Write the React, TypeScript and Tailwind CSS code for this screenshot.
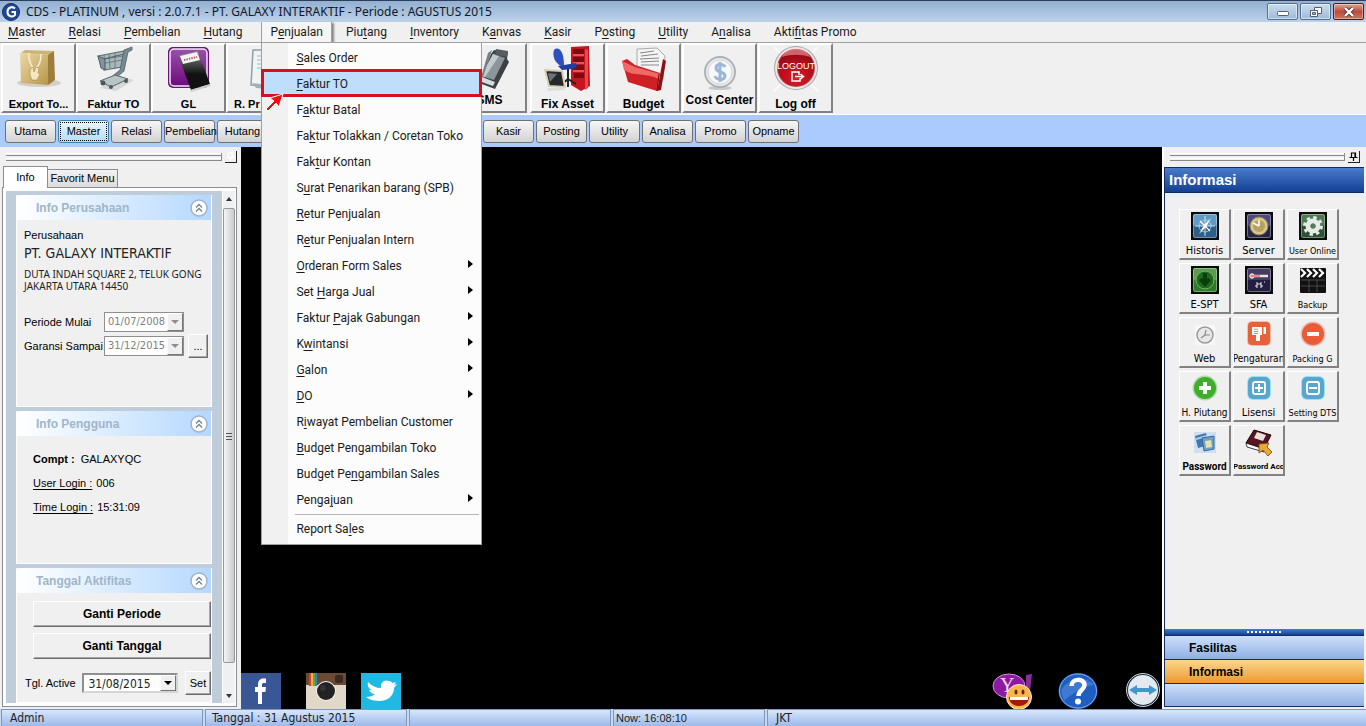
import { Fragment, ReactNode } from 'react';

const menus = [
  '&Master',
  '&Relasi',
  '&Pembelian',
  '&Hutang',
  'P&enjualan',
  'Piu&tang',
  '&Inventory',
  'K&anvas',
  '&Kasir',
  'P&osting',
  '&Utility',
  'A&nalisa',
  'Akti&fitas Promo',
];

const penjualanItems = [
  { label: '&Sales Order' },
  { label: '&Faktur TO', active: true },
  { label: 'F&aktur Batal' },
  { label: 'Fa&ktur Tolakkan / Coretan Toko' },
  { label: 'Fak&tur Kontan' },
  { label: 'S&urat Penarikan barang (SPB)' },
  { label: '&Retur Penjualan' },
  { label: 'R&etur Penjualan Intern' },
  { label: '&Orderan Form Sales', sub: true },
  { label: 'Set &Harga Jual', sub: true },
  { label: 'Faktur &Pajak Gabungan', sub: true },
  { label: 'K&wintansi', sub: true },
  { label: '&Galon', sub: true },
  { label: '&DO', sub: true },
  { label: 'R&iwayat Pembelian Customer' },
  { label: '&Budget Pengambilan Toko' },
  { label: 'Budget Pe&ngambilan Sales' },
  { label: 'Penga&juan', sub: true },
];

// "&" marks the access key, same as in the desktop resource files
const Mnemonic = ({ text }: { text: string }) => {
  const i = text.indexOf('&');
  if (i < 0) return <>{text}</>;
  return (
    <span className="whitespace-pre">
      {text.slice(0, i)}
      <span className="underline underline-offset-2">{text[i + 1]}</span>
      {text.slice(i + 2)}
    </span>
  );
};

/* ---------- toolbar icons ---------- */

const BagIcon = () => (
  <svg viewBox="0 0 48 48" className="h-12 w-12">
    <defs>
      <linearGradient id="bag" x1="0" y1="0" x2="1" y2="1">
        <stop offset="0" stopColor="#ecd9a6" />
        <stop offset="1" stopColor="#b8954a" />
      </linearGradient>
    </defs>
    <ellipse cx="24" cy="38" rx="22" ry="4" fill="#d2cfc8" />
    <path d="M6 8l4-3 29 1-5 4z" fill="#cbb478" />
    <path d="M5 8l28 2v30L6 38z" fill="url(#bag)" />
    <path d="M33 10l6-4 1 29-7 5z" fill="#9c7d3c" />
    <path d="M14 8c-1 8 2 12 4 15M26 9c0 8-2 12-5 14" fill="none" stroke="#f7edd0" strokeWidth="1.5" />
    <path d="M15 25l3-3 1 5 2-5 3 1-1 5 2 1-3 6h-5l-2-5z" fill="#f3e6c0" stroke="#a88b48" strokeWidth=".6" />
  </svg>
);

const CartIcon = () => (
  <svg viewBox="0 0 48 48" className="h-12 w-12">
    <path d="M10 43l20-11 14 3-18 11z" fill="#d6d6d6" />
    <path d="M8 11l26-5-2 16-18 3z" fill="#a9b8bc" stroke="#5e6f75" strokeWidth="1.2" />
    <path d="M9 15l24-4M10 19l22-4M14 10l1 14M19 9l1 14M25 8v15" fill="none" stroke="#6b7d83" strokeWidth="1" />
    <path d="M8 11l7 3v11l-4-2zM14 14l20-5" fill="#82949a" stroke="#4f6066" strokeWidth="1" />
    <path d="M42 2l-8 3-4 20-10 8 10 3 2-3-5-1 7-6 4-19 4-2z" fill="#788a90" stroke="#4f6066" strokeWidth=".8" />
    <path d="M10 36l15-6 13 4-17 8z" fill="#b7c4c8" stroke="#58696f" strokeWidth="1" />
    <circle cx="13" cy="38" r="2.500" fill="#4b585d" />
    <circle cx="36" cy="36" r="2" fill="#4b585d" />
    <circle cx="21" cy="42" r="2" fill="#4b585d" />
  </svg>
);

const LedgerIcon = () => (
  <svg viewBox="0 0 48 48" className="h-12 w-12">
    <defs>
      <linearGradient id="gl" x1="0" y1="0" x2="0" y2="1">
        <stop offset="0" stopColor="#9b4fae" />
        <stop offset="1" stopColor="#6d0a7c" />
      </linearGradient>
      <linearGradient id="book" x1="0" y1="0" x2="0" y2="1">
        <stop offset="0" stopColor="#8a8a8a" />
        <stop offset=".6" stopColor="#111" />
      </linearGradient>
    </defs>
    <rect x="3" y="2" width="41" height="41" rx="5" fill="#6a1277" />
    <rect x="5" y="4" width="37" height="37" rx="4" fill="url(#gl)" stroke="#f4e6f7" strokeWidth="1.5" />
    <path d="M13 10l20-4 12 33-19 6z" fill="url(#book)" />
    <path d="M25 45l20-6 1 2-20 6z" fill="#ccc" />
    <path d="M15 11l17-4 3 8-17 4z" fill="#f2f2f2" />
    <path d="M19 15l13-3" stroke="#c06070" strokeWidth="2" strokeDasharray="1.500 1" />
  </svg>
);

const PrinterIcon = () => (
  <svg viewBox="0 0 48 48" className="h-12 w-12">
    <path d="M13 5h26v36l-28-1z" fill="#eef3f4" stroke="#8fa0a6" strokeWidth="1.5" />
    <path d="M17 11h18M17 15h18M17 19h18M17 23h18" stroke="#a8b7bc" />
    <path d="M12 38l26 3v4l-22-2z" fill="#9fb0b6" />
  </svg>
);

const PhoneIcon = () => (
  <svg viewBox="0 0 48 48" className="h-12 w-12">
    <path d="M28 5l14 2-1 7 2 3-14 27-16-6L25 9z" fill="#3c4145" />
    <path d="M27 9l12 4-11 22-13-4z" fill="#8d959a" />
    <path d="M27 9l6 2-14 21-4-1z" fill="#c3cace" />
    <path d="M22 8l4-3-9 27-3 4z" fill="#777f84" />
    <path d="M13 36l14 5 2-4-13-5z" fill="#d5dadd" />
    <path d="M30 4l12 2-1 6-12-2z" fill="#565d62" />
  </svg>
);

const AssetIcon = () => (
  <svg viewBox="0 0 48 48" className="h-12 w-12">
    <path d="M27 2l18-1 1 40-9 5-10-6z" fill="#c4161c" />
    <path d="M29 4h11v5H29zM29 12h11v5H29zM29 20h11v5H29zM30 28h10v5H30z" fill="#7d0a10" />
    <path d="M41 4l3 1v38l-3 2z" fill="#e8494d" />
    <path d="M29 10h11M29 18h11M29 26h11" stroke="#f06a6a" strokeWidth="1.5" />
    <path d="M10 5c4-4 10 0 10 15l-3 1C11 18 8 11 10 5z" fill="#2f4fc0" />
    <path d="M14 21l18-3c2 3 0 5-4 6l-10 1z" fill="#1f3ea8" />
    <path d="M24 24v10M24 34l-7 6M24 34l8 5M24 34v8" stroke="#222" strokeWidth="2" fill="none" />
    <path d="M1 25l17 1 3 16-16-1z" fill="#26292c" stroke="#d8cfb4" strokeWidth="2" />
    <path d="M4 43h16l2 2-19 1z" fill="#ddd" />
    <path d="M4 28l9 1-7 8z" fill="#6c7276" />
  </svg>
);

const BudgetIcon = () => (
  <svg viewBox="0 0 48 48" className="h-12 w-12">
    <path d="M17 4l20-1 8 8-2 23-26-8z" fill="#f4f4f4" stroke="#999" strokeWidth=".8" />
    <path d="M20 8l14-2M21 11l17-2M20 14l19-1M21 17l18-1M21 20l18 0" stroke="#888" />
    <path d="M43 14l3 2-5 29-4 1z" fill="#8c1014" />
    <path d="M2 16l5-2 8 6 25 8-3 18-29-9z" fill="#cf2026" />
    <path d="M2 16l13 6 25 7-1 5C26 27 14 32 4 25z" fill="#ef6a66" />
    <path d="M37 46l2-17" stroke="#7b0a0e" />
  </svg>
);

const CostIcon = () => (
  <svg viewBox="0 0 48 48" className="h-12 w-12">
    <ellipse cx="24" cy="43" rx="12" ry="2" fill="#c9c9c9" />
    <circle cx="24" cy="27" r="15" fill="#e9ebee" stroke="#aeb2b6" strokeWidth="2" />
    <circle cx="24" cy="27" r="12" fill="#f7f8fa" stroke="#cfd3d7" />
    <path d="M29 22c-1-3-9-4-9 1s9 3 9 8-9 4-10 0M24 17v20" fill="none" stroke="#9db6d6" strokeWidth="3" />
  </svg>
);

const LogoutIcon = () => (
  <svg viewBox="0 0 48 48" className="h-12 w-12">
    <defs>
      <radialGradient id="lo" cx=".5" cy=".8" r=".8">
        <stop offset="0" stopColor="#e01a28" />
        <stop offset="1" stopColor="#8e0712" />
      </radialGradient>
    </defs>
    <path d="M2 2l44 44M46 2L2 46" stroke="#fff" strokeWidth="1.5" />
    <circle cx="24" cy="23" r="22" fill="#a8a8aa" />
    <circle cx="24" cy="23" r="21" fill="#f3e4e6" />
    <circle cx="24" cy="23" r="19" fill="#b64a54" />
    <circle cx="24" cy="23" r="18" fill="url(#lo)" />
    <path d="M10 12c6-11 22-11 28 0-8-3-20-3-28 0z" fill="#e88c92" opacity=".7" />
    <text x="24" y="24" textAnchor="middle" className="fill-white font-['Liberation_Sans',sans-serif] text-[9px] font-normal">LOGOUT</text>
    <path d="M27 30v-3h-7v9h8v-3M23 31.500h8M28.500 29l3 2.500-3 2.500" fill="none" stroke="#fff" strokeWidth="1.500" />
  </svg>
);

type Tool = { label: string; icon: ReactNode; text?: string };

const tools: Tool[] = [
  { label: 'Export To...', icon: <BagIcon />, text: 'text-[11px]' },
  { label: 'Faktur TO', icon: <CartIcon />, text: 'text-[11px]' },
  { label: 'GL', icon: <LedgerIcon />, text: 'text-[11px]' },
  { label: 'R. Pr', icon: <PrinterIcon />, text: 'text-[11px] self-start pl-1.5' },
];

const toolsRight: Tool[] = [
  { label: 'Fix Asset', icon: <AssetIcon /> },
  { label: 'Budget', icon: <BudgetIcon /> },
  { label: 'Cost Center', icon: <CostIcon />, text: 'text-[12px] -mt-2 pb-1' },
  { label: 'Log off', icon: <LogoutIcon /> },
];

const ToolButton = ({ label, icon, text = 'text-[12px]' }: Tool) => (
  <button className="flex h-[70px] w-[75px] flex-col items-center justify-between overflow-hidden border-2 border-t-white border-r-[#828282] border-b-[#828282] border-l-white bg-[#f0f0f0] font-['Liberation_Sans',sans-serif] leading-[14px] font-bold whitespace-nowrap text-black">
    {icon}
    <span className={text}>{label}</span>
  </button>
);

/* ---------- right panel icons ---------- */

const Plate = ({ color, dark, children }: { color: string; dark: string; children: ReactNode }) => (
  <svg viewBox="0 0 28 28" className="h-7 w-7">
    <rect width="28" height="28" fill="#0b0b0b" />
    <rect x="2" y="2" width="24" height="24" rx="2" fill={dark} />
    <rect x="2" y="2" width="24" height="12" rx="2" fill={color} />
    <rect x="2.500" y="2.500" width="23" height="23" rx="2" fill="none" stroke="#ffffff" strokeOpacity=".35" />
    {children}
  </svg>
);

const RoundSign = ({ color, d }: { color: string; d: string }) => (
  <svg viewBox="0 0 28 28" className="h-7 w-7">
    <circle cx="14" cy="14" r="12.500" fill={color} opacity=".35" />
    <circle cx="14" cy="14" r="11" fill={color} />
    <path d={d} stroke="#fff" strokeWidth="4" fill="none" />
  </svg>
);

const SquareSign = ({ d }: { d: string }) => (
  <svg viewBox="0 0 28 28" className="h-7 w-7">
    <rect x="2" y="2" width="24" height="24" rx="6" fill="#9be3f2" />
    <rect x="3" y="3" width="22" height="22" rx="5" fill="#5aa5cf" />
    <rect x="8" y="8" width="12" height="12" rx="2" fill="none" stroke="#fff" strokeWidth="1.800" />
    <path d={d} stroke="#fff" strokeWidth="2" fill="none" />
  </svg>
);

const tiles: { label: string; text?: string; icon: ReactNode }[] = [
  {
    label: 'Historis',
    icon: (
      <Plate color="#5f9bc4" dark="#2c5f8a">
        <circle cx="14" cy="14" r="6" fill="none" stroke="#b9d6ea" strokeWidth=".8" />
        <path d="M14 4v20M4 14h20" stroke="#c9e0ee" />
        <path d="M20 6l-5 9-7 7 5-9z" fill="#fff" />
        <path d="M9 9l10 10" stroke="#fff" strokeWidth="1.200" />
      </Plate>
    ),
  },
  {
    label: 'Server',
    icon: (
      <Plate color="#4a4a80" dark="#25254c">
        <circle cx="14" cy="14" r="9" fill="#d8c78c" stroke="#8d8050" />
        <circle cx="14" cy="14" r="6" fill="#b5a25e" />
        <path d="M14 14l-6-3M14 14V8" stroke="#fff" strokeWidth="1.500" />
      </Plate>
    ),
  },
  {
    label: 'User Online',
    text: 'text-[9px]',
    icon: (
      <Plate color="#4d7a52" dark="#2c5233">
        <circle cx="14" cy="14" r="5" fill="none" stroke="#e6ebe6" strokeWidth="5" />
        <circle cx="14" cy="14" r="8.500" fill="none" stroke="#e6ebe6" strokeWidth="3" strokeDasharray="3.340 3.340" />
        <circle cx="14" cy="14" r="2.500" fill="#5b7a60" />
      </Plate>
    ),
  },
  {
    label: 'E-SPT',
    icon: (
      <Plate color="#5c9a4e" dark="#2f7a2a">
        <circle cx="14" cy="14" r="9" fill="#1f6a1e" stroke="#6fb861" />
        <path d="M14 7v9M9.500 13l4.500 5 4.500-5" stroke="#0c3d0d" strokeWidth="4" fill="none" />
      </Plate>
    ),
  },
  {
    label: 'SFA',
    icon: (
      <Plate color="#423c63" dark="#241f40">
        <path d="M7 10h16" stroke="#f1dede" strokeWidth="2.500" />
        <circle cx="7" cy="10" r="2.200" fill="#d88" stroke="#fff" />
        <path d="M8 10h7" stroke="#c33" />
        <path d="M11 17h2v2h-2v2h2M17 17h-2v2h2v2h-2M19 16h1" stroke="#fff" strokeWidth=".9" fill="none" />
      </Plate>
    ),
  },
  {
    label: 'Backup',
    text: 'text-[9px]',
    icon: (
      <svg viewBox="0 0 28 28" className="h-7 w-7">
        <rect x="1" y="2" width="26" height="25" rx="1" fill="#111" />
        <path d="M2 3l4 4-4 4M8 3l4 4-4 4M14 3l4 4-4 4M20 3l4 4-4 4" stroke="#fff" strokeWidth="2.200" fill="none" />
        <path d="M2 14h24M2 20h24M10 14v12M18 14v12" stroke="#555" strokeWidth=".8" />
      </svg>
    ),
  },
  {
    label: 'Web',
    icon: (
      <svg viewBox="0 0 28 28" className="h-7 w-7">
        <path d="M4 5h20v20H4z" fill="#f8f8f8" />
        <circle cx="14" cy="15" r="8" fill="#e8e8e8" stroke="#9a9a9a" strokeWidth="1.500" />
        <path d="M15 10l-1 5h5M14 15l-4 3" stroke="#888" strokeWidth="1.200" fill="none" />
      </svg>
    ),
  },
  {
    label: 'Pengaturan',
    text: 'text-[10px]',
    icon: (
      <svg viewBox="0 0 28 28" className="h-7 w-7">
        <rect x="2" y="1" width="24" height="25" rx="5" fill="#f7bfa8" />
        <rect x="3" y="2" width="22" height="23" rx="4" fill="#e8603c" />
        <path d="M7 7h10v8h-2v6h-4v-6H7zM18.500 7H21v7h-2.500z" fill="#fff" />
        <path d="M9 11.500h4M9 9.200h4M9 13.500h4" stroke="#e8603c" strokeWidth=".8" />
      </svg>
    ),
  },
  { label: 'Packing G', text: 'text-[9px]', icon: <RoundSign color="#ea5b38" d="M8 14h12" /> },
  { label: 'H. Piutang', text: 'text-[10px]', icon: <RoundSign color="#3fae2a" d="M8 14h12M14 8v12" /> },
  { label: 'Lisensi', icon: <SquareSign d="M10 14h8M14 10v8" /> },
  { label: 'Setting DTS', text: 'text-[9px]', icon: <SquareSign d="M10 14h8" /> },
  {
    label: 'Password',
    text: "text-[10px] font-bold font-['Roboto',sans-serif]",
    icon: (
      <svg viewBox="0 0 28 28" className="h-7 w-7">
        <rect x="3" y="4" width="22" height="21" fill="#cfdff0" />
        <path d="M4 8l11-3 3 12-11 3z" fill="#3f78b0" />
        <path d="M5 11l11-3" stroke="#a9cbe8" strokeWidth="2" />
        <path d="M11 10l12-2v13l-10 2z" fill="#6fa0cc" stroke="#356a9c" />
        <path d="M14 13l6-1 1 7-6 1z" fill="#e6e0a8" />
      </svg>
    ),
  },
  {
    label: 'Password Acc',
    text: "text-[8px] font-bold font-['Roboto',sans-serif]",
    icon: (
      <svg viewBox="0 0 28 28" className="h-7 w-7">
        <path d="M9 2l17 5-7 14L1 15z" fill="#5a1420" stroke="#1a0508" />
        <path d="M12 4l9 3-3 6-9-3z" fill="#e8e3e0" />
        <path d="M1 15l18 6v3L2 19z" fill="#fff" stroke="#111" strokeWidth=".8" />
        <path d="M14 16l10-1-2 4 5 5-4 4-5-6-4 3z" fill="#e9a936" stroke="#6e4608" strokeWidth=".8" />
      </svg>
    ),
  },
];

/* ---------- small shared pieces ---------- */

const AppLogo = () => (
  <svg viewBox="0 0 18 18" className="h-[18px] w-[18px]">
    <circle cx="9" cy="9" r="8.500" fill="#1f4795" stroke="#142d66" />
    <path d="M13 5.500C10.500 3 5.500 4 5.500 9s5.500 5.500 7.500 3V9H9.500" fill="none" stroke="#fff" strokeWidth="2" />
  </svg>
);

const Gripper = ({ faded }: { faded?: boolean }) => (
  <div className="flex h-[19px] items-center gap-[3px] pt-px pr-1 pl-1.5">
    <div className="flex flex-1 flex-col gap-[2px] border-r border-[#8a8a8a]">
      <div className="h-[3px] border-t border-b border-t-white border-b-[#8a8a8a]" />
      <div className="h-[3px] border-t border-b border-t-white border-b-[#8a8a8a]" />
    </div>
    <button aria-label="Pin" className="h-3 w-3 border-r border-b border-[#222] bg-[#f0f0f0]">
      <svg viewBox="0 0 11 11" className="h-[11px] w-[11px]">
        <path d="M3.500 6V2h4v4M7 2v4M1.500 6.500h8M5.500 7v3" fill="none" stroke={faded ? '#fff' : '#000'} strokeWidth="1.200" />
      </svg>
    </button>
  </div>
);

const Card = ({ title, className, children }: { title: string; className: string; children: ReactNode }) => (
  <section className={`border-x border-b border-white bg-[#f0f0f0] ${className}`}>
    <h2 className="flex h-[25px] items-center justify-between rounded-tl-[4px] bg-linear-to-r from-white to-[#b5d8ff] pr-[3px] pl-[19px] text-[12px] font-bold text-[#9fb6c9]">
      {title}
      <svg viewBox="0 0 18 18" className="h-[18px] w-[18px]">
        <circle cx="9" cy="9" r="8" fill="#fff" stroke="#9fb3c8" strokeWidth="1.500" />
        <path d="M6 8.500l3-3 3 3M6 12.500l3-3 3 3" fill="none" stroke="#6d8499" strokeWidth="1.300" />
      </svg>
    </h2>
    {children}
  </section>
);

const Combo = ({ id, value, disabled }: { id: string; value: string; disabled?: boolean }) => (
  <div className={disabled
    ? 'flex h-5 w-20 shrink-0 border border-[#8f8f8f] bg-white text-[#808080]'
    : 'flex h-5 w-24 shrink-0 border-2 border-[#8f8f8f] border-r-[#d5d5d5] border-b-[#d5d5d5] bg-white text-[#222]'}>
    <select id={id} disabled={disabled} className={disabled
      ? "min-w-0 flex-1 appearance-none pl-[3px] text-[11px] opacity-100 font-['DejaVu_Sans_Condensed','DejaVu_Sans',sans-serif]"
      : "min-w-0 flex-1 appearance-none pl-1 text-[12px] font-['DejaVu_Sans_Condensed','DejaVu_Sans',sans-serif]"}>
      <option>{value}</option>
    </select>
    <span className="pointer-events-none flex w-4 items-center justify-center border border-white border-r-[#777] border-b-[#777] bg-[#f0f0f0]">
      <svg viewBox="0 0 8 4" className="h-1 w-2"><path d="M0 0h8L4 4z" fill={disabled ? '#8f8f8f' : '#000'} /></svg>
    </span>
  </div>
);

const ClassicButton = ({ className, children }: { className: string; children: ReactNode }) => (
  <button className={`border border-t-white border-r-[#6b6b6b] border-b-[#6b6b6b] border-l-white bg-[#f0f0f0] shadow-[inset_-1px_-1px_0_#a8a8a8] ${className}`}>{children}</button>
);

const SmallTab = ({ label, active }: { label: string; active?: boolean }) => (
  <button className={active
    ? 'h-[23px] w-[51px] rounded-[3px] border border-[#3c7fb1] bg-linear-to-b from-[#eaf6fd] to-[#b7dcf2] outline-1 -outline-offset-3 outline-dotted outline-black'
    : 'h-[23px] w-[51px] rounded-[3px] border border-[#707070] bg-linear-to-b from-[#f6f6f6] to-[#d3d3d3]'}>{label}</button>
);

const Dropdown = () => (
  <div className="absolute top-full -left-px z-10 w-[221px] border border-[#a0a0a0] bg-[linear-gradient(90deg,#f1f1f1_26px,#fcfcfc_26px)] pt-0.5 pb-0.5">
    {penjualanItems.map(({ label, active, sub }) => (
      <button
        key={label}
        className={active
          ? 'relative flex h-[26px] w-full items-center pl-[34px]'
          : 'flex h-[26px] w-full items-center justify-between pr-2 pl-[34px]'}
      >
        {active && (
          <>
            <span className="absolute -inset-x-px -top-[2px] h-7 border-3 border-[#d8101c] bg-[#bfdefc]" />
            <svg viewBox="0 0 20 20" className="absolute top-[21px] left-[3px] z-10 h-5 w-5">
              <path d="M1 17L9 9 5 6l13-4-4 13-3-4-8 8z" fill="#f00d14" stroke="#fff" strokeWidth="1" />
            </svg>
          </>
        )}
        <span className="relative"><Mnemonic text={label} /></span>
        {sub && <svg viewBox="0 0 5 8" className="mb-1 h-2 w-[5px]"><path d="M0 0l5 4-5 4z" fill="#000" /></svg>}
      </button>
    ))}
    <hr className="my-px mr-0.5 ml-[33px] border-[#b5b5b5]" />
    <button className="flex h-[26px] w-full items-center pl-[34px]"><Mnemonic text="Report Sa&les" /></button>
  </div>
);

const App = () => (
  <div className="flex h-screen flex-col overflow-hidden bg-[#f0f0f0] font-['Liberation_Sans',sans-serif] text-[11px] text-black">
    <header className="flex h-[22px] shrink-0 items-center justify-between border-t border-[#2d3e5c] bg-linear-to-b from-[#93b0d1] to-[#bcd2e9] pr-0.5 pl-0.5">
      <h1 className="flex items-center gap-1.5 font-['Noto_Sans',sans-serif] text-[12px] whitespace-pre text-[#101828]">
        <AppLogo />
        CDS - PLATINUM , versi : 2.0.7.1 - PT. GALAXY INTERAKTIF - Periode : AGUSTUS 2015
      </h1>
      <div className="flex gap-0.5">
        <button aria-label="Minimize" className="flex h-[17px] w-[31px] items-center justify-center rounded-[2px] border border-[#54708f] bg-linear-to-b from-[#c9dcf0] to-[#9fbbd8] shadow-[inset_0_0_0_1px_#ffffff80]">
          <svg viewBox="0 0 12 6" className="mt-1 h-1.5 w-3"><rect x=".5" y=".5" width="11" height="4" rx="1" fill="#fff" stroke="#555f6e" /></svg>
        </button>
        <button aria-label="Restore" className="flex h-[17px] w-[31px] items-center justify-center rounded-[2px] border border-[#54708f] bg-linear-to-b from-[#c9dcf0] to-[#9fbbd8] shadow-[inset_0_0_0_1px_#ffffff80]">
          <svg viewBox="0 0 12 12" className="h-3 w-3">
            <path d="M4.500 1.500h7v6h-7z" fill="#fff" stroke="#555f6e" />
            <path d="M.5 4.500h7v6h-7z" fill="#fff" stroke="#555f6e" />
            <path d="M2.500 6.500h3v2h-3z" fill="#9fbbd8" stroke="#555f6e" />
          </svg>
        </button>
        <button aria-label="Close" className="flex h-[17px] w-[31px] items-center justify-center rounded-[2px] border border-[#5a1a1a] bg-linear-to-b from-[#dfa59b] via-[#bc4a39] to-[#cf7460] shadow-[inset_0_0_0_1px_#ffffff60]">
          <svg viewBox="0 0 12 10" className="h-2.5 w-3">
            <path d="M2 1l8 8M10 1L2 9" stroke="#533" strokeWidth="4" />
            <path d="M2 1l8 8M10 1L2 9" stroke="#fff" strokeWidth="2.400" />
          </svg>
        </button>
      </div>
    </header>

    <nav className="flex h-[21px] shrink-0 border-b border-[#a0a0a0] font-['Roboto',sans-serif] text-[12px] text-[#1a1a1a]">
      {menus.map((m, i) => (
        <Fragment key={m}>
          {i === 4 ? (
            <div className="relative mr-0.5 ml-2 border-l border-[#a0a0a0]">
              <button className="h-5 border-r border-[#a0a0a0] bg-[#f5f5f5] px-2 shadow-[2px_1px_2px_#888]"><Mnemonic text={m} /></button>
              <Dropdown />
            </div>
          ) : (
            <button className={i === 0 ? 'h-5 pr-[11px] pl-2' : 'h-5 pr-[11px] pl-3'}><Mnemonic text={m} /></button>
          )}
        </Fragment>
      ))}
    </nav>

    <div className="flex h-[72px] shrink-0 border-b border-white pl-px">
      {tools.map((t) => <ToolButton key={t.label} {...t} />)}
      <div className="w-[151px]" />
      <ToolButton label="SMS" icon={<PhoneIcon />} text="text-[12px] -mt-2 pb-1" />
      <div className="ml-[3px] flex gap-px">
        {toolsRight.map((t) => <ToolButton key={t.label} {...t} />)}
      </div>
    </div>

    <div className="flex h-8 shrink-0 items-center gap-0.5 bg-[#abcbff] pl-[5px] text-[11px]">
      {['Utama', 'Master', 'Relasi', 'Pembelian', 'Hutang'].map((t) => <SmallTab key={t} label={t} active={t === 'Master'} />)}
      <div className="w-[211px]" />
      {['Kasir', 'Posting', 'Utility', 'Analisa', 'Promo', 'Opname'].map((t) => <SmallTab key={t} label={t} />)}
    </div>

    <main className="flex min-h-0 flex-1">
      <aside className="flex w-[241px] shrink-0 flex-col pb-0.5">
        <Gripper faded />
        <div className="relative z-[1] -mb-px flex items-end pl-[3px]">
          <button className="h-[22px] w-[45px] border border-b-0 border-[#8a8d94] bg-white">Info</button>
          <button className="h-[19px] w-[70px] border border-l-0 border-[#8a8d94] bg-linear-to-b from-[#f2f2f2] to-[#dcdcdc] whitespace-nowrap">Favorit Menu</button>
        </div>
        <div className="mr-1 ml-0.5 flex min-h-0 flex-1 border border-[#8a8d94] bg-white p-[3px] pr-px">
          <div className="flex min-h-0 flex-1 flex-col gap-1 overflow-hidden bg-[#bfccd9] pt-1 pr-2.5 pl-2.5">
            <Card title="Info Perusahaan" className="h-[212px] shrink-0">
              <div className="pt-[7px] pl-[7px]">
                <p className="leading-4">Perusahaan</p>
                <p className="font-['DejaVu_Sans_Condensed','DejaVu_Sans',sans-serif] text-[14px] leading-5 whitespace-nowrap text-[#222]">PT. GALAXY INTERAKTIF</p>
                <p className="mt-[5px] font-['Noto_Sans',sans-serif] text-[10px] leading-3 whitespace-nowrap text-[#222]">DUTA INDAH SQUARE 2, TELUK GONG<br />JAKARTA UTARA 14450</p>
                <div className="mt-5 flex items-center gap-0.5">
                  <label htmlFor="mulai" className="w-[78px] whitespace-nowrap">Periode Mulai</label>
                  <Combo id="mulai" value="01/07/2008" disabled />
                </div>
                <div className="mt-0.5 flex items-center gap-0.5">
                  <label htmlFor="sampai" className="w-[78px] whitespace-nowrap">Garansi Sampai</label>
                  <Combo id="sampai" value="31/12/2015" disabled />
                  <ClassicButton className="ml-0.5 h-6 w-5">...</ClassicButton>
                </div>
              </div>
            </Card>
            <Card title="Info Pengguna" className="h-[153px] shrink-0">
              <div className="flex flex-col gap-2 pt-[15px] pl-4 leading-4">
                <p><b>Compt :</b>&nbsp; GALAXYQC</p>
                <p><span className="mr-1 underline underline-offset-2">User Login :</span>006</p>
                <p><span className="mr-1 underline underline-offset-2">Time Login :</span>15:31:09</p>
              </div>
            </Card>
            <Card title="Tanggal Aktifitas" className="min-h-0 flex-1">
              <div className="flex flex-col gap-1.5 pt-2 pl-4 text-[12px] font-bold">
                <ClassicButton className="h-[26px]">Ganti Periode</ClassicButton>
                <ClassicButton className="h-[26px]">Ganti Tanggal</ClassicButton>
              </div>
              <div className="flex items-center justify-between pt-3 pl-2">
                <label htmlFor="tgl" className="whitespace-nowrap">Tgl. Active</label>
                <Combo id="tgl" value="31/08/2015" />
                <ClassicButton className="h-6 w-[26px]">Set</ClassicButton>
              </div>
            </Card>
          </div>
          <div className="ml-px flex w-3 flex-col items-center bg-[#f0f0f0]">
            <svg viewBox="0 0 12 17" className="h-[17px] w-3"><path d="M3 10l3-4 3 4z" fill="#333" /></svg>
            <div className="flex w-full flex-1 items-center justify-center rounded-[2px] border border-[#979797] bg-linear-to-r from-[#f5f5f5] to-[#c8cbd0]">
              <svg viewBox="0 0 6 8" className="h-2 w-1.5"><path d="M0 1.500h6M0 4.500h6M0 7.500h6" stroke="#555" /></svg>
            </div>
            <svg viewBox="0 0 12 40" className="h-10 w-3"><path d="M3 31l3 4 3-4z" fill="#333" /></svg>
          </div>
        </div>
      </aside>

      <section className="flex min-w-0 flex-1 items-end justify-between bg-black">
        <div className="flex">
          <a href="#facebook" aria-label="Facebook">
            <svg viewBox="0 0 40 36" className="h-9 w-10">
              <rect width="40" height="36" fill="#3a5795" />
              <path d="M17 31V19h-3v-5h3v-2c0-4 2-6.500 5-6.500h3V10h-2c-1.500 0-2 .6-2 2v2h4l-.6 5H21v12z" fill="#fff" />
            </svg>
          </a>
          <a href="#instagram" aria-label="Instagram" className="ml-[25px]">
            <svg viewBox="0 0 40 36" className="h-9 w-10">
              <rect width="40" height="36" fill="#e2d8c8" />
              <rect width="40" height="12" fill="#6b4a35" />
              <path d="M3 0h2v13H3z" fill="#d8402f" />
              <path d="M5 0h2v13H5z" fill="#e8b93a" />
              <path d="M7 0h2v13H7z" fill="#5aa84a" />
              <path d="M9 0h2v13H9z" fill="#3f7fb8" />
              <rect x="29" y="2" width="8" height="8" rx="2" fill="#3c2a20" />
              <circle cx="20" cy="18" r="10" fill="#f3eee6" />
              <circle cx="20" cy="18" r="9" fill="#222" />
              <circle cx="17" cy="15" r="3" fill="#333" />
            </svg>
          </a>
          <a href="#twitter" aria-label="Twitter" className="ml-[15px]">
            <svg viewBox="0 0 40 36" className="h-9 w-10">
              <rect width="40" height="36" fill="#22b8e4" />
              <path d="M7 9c4 4 8 6 13 6-1-6 4-9 8-7 2 0 3 2 4 2l3-1-2 3 3-1-3 4c0 9-8 13-14 13-5 0-10-1-14-4 4 0 7-1 9-3-3 0-5-2-6-4h3c-3-1-5-4-4-8z" fill="#fff" />
            </svg>
          </a>
        </div>
        <div className="flex gap-6">
          <a href="#messenger" aria-label="Messenger">
            <svg viewBox="0 0 42 36" className="h-9 w-[42px]">
              <ellipse cx="17" cy="13" rx="16" ry="12" fill="#8d1aa0" stroke="#d58ee0" />
              <path d="M34 2l6-1-2 17-4-2z" fill="#8a2c9c" />
              <text x="8" y="19" className="fill-[#f4dcf8] font-['Liberation_Serif',serif] text-[20px]">Y</text>
              <circle cx="27" cy="24" r="12.500" fill="#f9b64a" stroke="#fff0c8" />
              <ellipse cx="24" cy="19" rx="1.500" ry="2.500" fill="#5c2a0a" />
              <ellipse cx="31" cy="19" rx="1.500" ry="2.500" fill="#5c2a0a" />
              <path d="M17 24h20c0 12-20 12-20 0z" fill="#a01a10" />
              <path d="M18 24h18v3H18z" fill="#fff" />
            </svg>
          </a>
          <a href="#help" aria-label="Help">
            <svg viewBox="0 0 40 36" className="h-9 w-10">
              <ellipse cx="20" cy="18" rx="19.500" ry="18" fill="#1f5fc0" />
              <ellipse cx="20" cy="18" rx="18.500" ry="17" fill="none" stroke="#7fa9e2" />
              <path d="M3 18C8 6 28 2 36 12 28 12 14 20 6 28z" fill="#4b86d8" opacity=".7" />
              <path d="M13.500 13c0-8 13-8 13-1 0 5-6 5-6 11" fill="none" stroke="#fff" strokeWidth="4.500" />
              <circle cx="20" cy="28.500" r="3" fill="#fff" />
            </svg>
          </a>
          <a href="#remote" aria-label="Remote support">
            <svg viewBox="0 0 40 36" className="h-9 w-10">
              <circle cx="21" cy="17" r="16.500" fill="#1a2a3a" stroke="#c9d4de" />
              <circle cx="21" cy="17" r="15" fill="#e3e9ef" />
              <path d="M7 17l8-5v3h12v-3l8 5-8 5v-3H15v3z" fill="#3f97cc" />
            </svg>
          </a>
        </div>
      </section>

      <aside className="flex w-[204px] shrink-0 flex-col border-l-2 border-white pr-0.5 pb-0.5">
        <Gripper />
        <div className="mt-px flex flex-1 flex-col border-l border-[#122a5c]">
          <h2 className="h-[26px] border-y border-[#122a5c] bg-linear-to-b from-[#4a7ccb] to-[#143f94] pl-1 text-[15px] leading-6 font-bold text-white">Informasi</h2>
          <div className="h-1 bg-[#e6f0fc]" />
          <div className="flex-1 pt-3 pl-3.5">
            <div className="grid w-max grid-cols-[repeat(3,52px)] gap-x-0.5 gap-y-[3px]">
              {tiles.map(({ label, icon, text = 'text-[11px]' }) => (
                <button
                  key={label}
                  className="flex h-[51px] flex-col items-center justify-between overflow-hidden border border-r-2 border-b-2 border-t-white border-r-[#828282] border-b-[#828282] border-l-white pt-0.5 font-['DejaVu_Sans_Condensed','DejaVu_Sans',sans-serif] leading-[14px] whitespace-nowrap"
                >
                  {icon}
                  <span className={text}>{label}</span>
                </button>
              ))}
            </div>
          </div>
          <div className="flex h-[7px] items-center justify-center border-b border-[#122a5c] bg-linear-to-b from-[#4a7ccb] to-[#143f94]">
            <svg viewBox="0 0 36 4" className="h-1 w-9"><path d="M0 2h36" stroke="#fff" strokeWidth="2" strokeDasharray="2 2" /></svg>
          </div>
          <button className="h-6 border-b border-[#1c2b4a] bg-linear-to-b from-[#cde0fb] to-[#90b0e2] pl-6 text-left text-[12px] font-bold">Fasilitas</button>
          <button className="h-6 border-b border-[#1c2b4a] bg-linear-to-b from-[#fbd68a] to-[#eb9a28] pl-6 text-left text-[12px] font-bold">Informasi</button>
          <div className="h-[23px] border-b border-[#122a5c] bg-linear-to-b from-[#cde0fb] to-[#90b0e2]" />
        </div>
      </aside>
    </main>

    <footer className="flex h-[17px] shrink-0 gap-0.5 bg-[#c5d9f5] pl-px font-['DejaVu_Sans_Condensed','DejaVu_Sans',sans-serif] text-[12px] leading-4 whitespace-nowrap text-[#222]">
      <div className="w-[202px] border border-b-0 border-[#7f96b8] bg-linear-to-b from-[#d8e6fb] to-[#9cbaea] pl-2">Admin</div>
      <div className="w-[202px] border border-b-0 border-[#7f96b8] bg-linear-to-b from-[#d8e6fb] to-[#9cbaea] pl-1.5">Tanggal : 31 Agustus 2015</div>
      <div className="w-[202px] border border-b-0 border-[#7f96b8] bg-linear-to-b from-[#d8e6fb] to-[#9cbaea]" />
      <div className="w-[152px] border border-b-0 border-[#7f96b8] bg-linear-to-b from-[#d8e6fb] to-[#9cbaea] pl-0.5 font-['Liberation_Sans',sans-serif] text-[11px]">Now: 16:08:10</div>
      <div className="flex-1 border border-r-0 border-b-0 border-[#7f96b8] bg-linear-to-b from-[#d8e6fb] to-[#9cbaea] pl-2">JKT</div>
    </footer>
  </div>
);

export default App;
